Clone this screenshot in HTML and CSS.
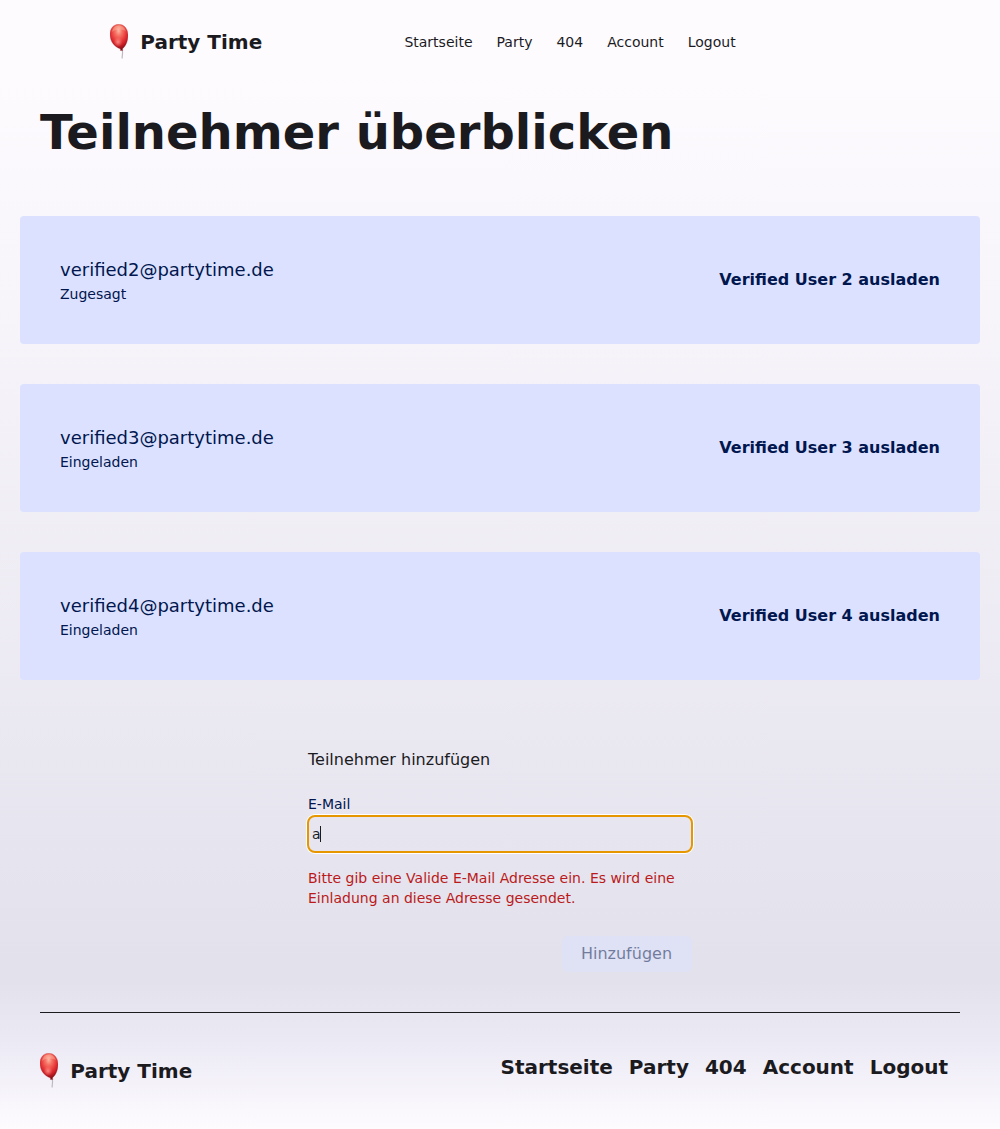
FILE: index.html
```html
<!DOCTYPE html>
<html lang="de">
<head>
<meta charset="utf-8">
<title>Party Time</title>
<link rel="stylesheet" href="styles.css">
</head>
<body>
<svg class="defs" width="0" height="0" aria-hidden="true">
  <defs>
    <radialGradient id="skin" cx="0.48" cy="0.25" r="0.73">
      <stop offset="0" stop-color="#ffb5a0"/>
      <stop offset="0.25" stop-color="#f57466"/>
      <stop offset="0.55" stop-color="#ea3c3c"/>
      <stop offset="0.75" stop-color="#ce2028"/>
      <stop offset="1" stop-color="#7d0c13"/>
    </radialGradient>
    <radialGradient id="glow">
      <stop offset="0" stop-color="#ffaaa0" stop-opacity="0.7"/>
      <stop offset="1" stop-color="#ff8880" stop-opacity="0"/>
    </radialGradient>
    <symbol id="balloon" viewBox="0 0 18 36">
      <path d="M12.2 26.5C13.4 29 11.8 31 12.2 34.5" fill="none" stroke="#bcbabf" stroke-width="1.2"/>
      <path d="M8.4 0.2C13.8 0 18 4.700 18 11C18 17.500 15.800 22 12.400 24.900L13 26.500H10.300L10.500 25.100C4.200 22.700 0 17.400 0 10.300C0 4.500 3.300 0.500 8.400 0.200Z" fill="url(#skin)" stroke="#a62a2c" stroke-opacity="0.45" stroke-width="0.6"/>
      <ellipse cx="8" cy="18" rx="4.500" ry="5" fill="url(#glow)"/>
      <path d="M2.200 8C2.600 3.800 5 1.700 8.800 1.500C12.500 1.500 15 3.800 15.900 7.500C13 4.900 5.500 4.900 2.200 8Z" fill="#ffe1c8" opacity="0.3"/>
    </symbol>
  </defs>
</svg>
<header class="header">
  <a class="brand"><svg class="logo"><use href="#balloon"/></svg><span>Party Time</span></a>
  <nav class="nav"><a>Startseite</a><a>Party</a><a>404</a><a>Account</a><a>Logout</a></nav>
</header>
<main class="main">
  <h1 class="title">Teilnehmer überblicken</h1>
  <section class="guests">
    <article class="guest"><div><p class="mail">verified2@partytime.de</p><p class="status">Zugesagt</p></div><button class="remove">Verified User 2 ausladen</button></article>
    <article class="guest"><div><p class="mail">verified3@partytime.de</p><p class="status">Eingeladen</p></div><button class="remove">Verified User 3 ausladen</button></article>
    <article class="guest"><div><p class="mail">verified4@partytime.de</p><p class="status">Eingeladen</p></div><button class="remove">Verified User 4 ausladen</button></article>
  </section>
  <form class="form">
    <h2 class="form-title">Teilnehmer hinzufügen</h2>
    <label class="label">E-Mail</label>
    <div class="field"><span>a</span><i class="caret"></i></div>
    <p class="error">Bitte gib eine Valide E-Mail Adresse ein. Es wird eine Einladung an diese Adresse gesendet.</p>
    <button class="submit" type="button" disabled>Hinzufügen</button>
  </form>
</main>
<footer class="footer">
  <div class="footer-row">
    <a class="brand"><svg class="logo"><use href="#balloon"/></svg><span>Party Time</span></a>
    <nav class="footer-nav"><a>Startseite</a><a>Party</a><a>404</a><a>Account</a><a>Logout</a></nav>
  </div>
</footer>
</body>
</html>
```
FILE: styles.css
```css
* { box-sizing: border-box; margin: 0; padding: 0; }
body {
  height: 1129px;
  font-family: "DejaVu Sans", sans-serif;
  font-size: 14px;
  line-height: 20px;
  color: #1b1b1f;
  background: linear-gradient(#fefbff 0, #fefbff 80px, #e3e1ec 960px, #e3e1ec 980px, #ebe9f4 1040px, #fefbff 1129px);
}
.defs { position: absolute; }
button { border: 0; background: none; font: inherit; color: inherit; }
.header { height: 84px; padding-left: 110px; display: flex; align-items: center; }
.brand { display: flex; align-items: center; gap: 12.3px; width: 294.4px; font-size: 20px; font-weight: 700; line-height: 28px; }
.logo { width: 18px; height: 36px; flex: none; }
.nav { display: flex; gap: 24px; }
.title { height: 132px; padding: 16px 40px 0; font-size: 48px; line-height: 64px; font-weight: 700; }
.guests { display: grid; gap: 40px; padding: 0 20px; }
.guest { height: 128px; padding: 0 40px; display: flex; align-items: center; justify-content: space-between; border-radius: 4px; background: #dce1ff; color: #00164e; }
.mail { font-size: 18px; line-height: 28px; }
.status { line-height: 20px; }
.remove { font-size: 16px; line-height: 24px; font-weight: 700; }
.form { width: 384px; margin: 68px auto 0; display: flex; flex-direction: column; }
.form-title { font-size: 16px; line-height: 24px; font-weight: 400; }
.label { margin-top: 22px; color: #00164e; }
.field { height: 36px; margin-top: 2px; padding: 0 4px; display: flex; align-items: center; border-radius: 7px; outline: 2px solid #e69700; outline-offset: -1px; box-shadow: 0 0 0 2px #fff; }
.caret { width: 1px; height: 16px; margin-left: -1px; background: #1b1b1f; }
.error { margin-top: 16px; color: #ba1a1a; }
.submit { align-self: flex-end; width: 130px; height: 36px; margin-top: 28px; padding-right: 1px; border-radius: 6px; background: #dce1ff; color: #00164e; font-size: 16px; opacity: 0.5; }
.footer { margin: 40px 40px 0; border-top: 1px solid #1b1b1f; }
.footer-row { display: flex; justify-content: space-between; padding: 40px 12px 0 0; }
.footer-nav { display: flex; gap: 16px; font-size: 20px; line-height: 28px; font-weight: 700; }
```
